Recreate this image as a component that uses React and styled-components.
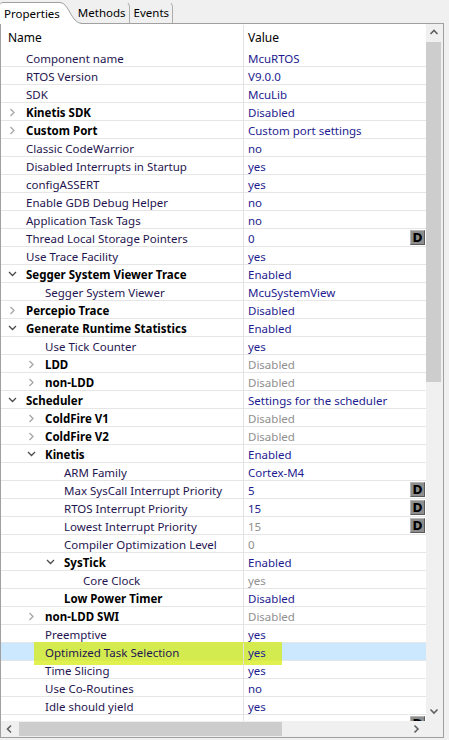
import styled, { createGlobalStyle } from "styled-components"

const GlobalStyle = createGlobalStyle`
  html, body {
    margin: 0;
    padding: 0;
    background: #f0f0f0;
  }
  body {
    font-family: "Noto Sans", "Open Sans", "Liberation Sans", sans-serif;
    font-size: 11.5px;
  }
`

const rows = [
  { name: "Component name", value: "McuRTOS" },
  { name: "RTOS Version", value: "V9.0.0" },
  { name: "SDK", value: "McuLib" },
  { name: "Kinetis SDK", value: "Disabled", bold: true, toggle: "closed" },
  { name: "Custom Port", value: "Custom port settings", bold: true, toggle: "closed" },
  { name: "Classic CodeWarrior", value: "no" },
  { name: "Disabled Interrupts in Startup", value: "yes" },
  { name: "configASSERT", value: "yes" },
  { name: "Enable GDB Debug Helper", value: "no" },
  { name: "Application Task Tags", value: "no" },
  { name: "Thread Local Storage Pointers", value: "0", d: true },
  { name: "Use Trace Facility", value: "yes" },
  { name: "Segger System Viewer Trace", value: "Enabled", bold: true, toggle: "open" },
  { name: "Segger System Viewer", value: "McuSystemView", level: 1 },
  { name: "Percepio Trace", value: "Disabled", bold: true, toggle: "closed" },
  { name: "Generate Runtime Statistics", value: "Enabled", bold: true, toggle: "open" },
  { name: "Use Tick Counter", value: "yes", level: 1 },
  { name: "LDD", value: "Disabled", level: 1, bold: true, toggle: "closed", muted: true },
  { name: "non-LDD", value: "Disabled", level: 1, bold: true, toggle: "closed", muted: true },
  { name: "Scheduler", value: "Settings for the scheduler", bold: true, toggle: "open" },
  { name: "ColdFire V1", value: "Disabled", level: 1, bold: true, toggle: "closed", muted: true },
  { name: "ColdFire V2", value: "Disabled", level: 1, bold: true, toggle: "closed", muted: true },
  { name: "Kinetis", value: "Enabled", level: 1, bold: true, toggle: "open" },
  { name: "ARM Family", value: "Cortex-M4", level: 2 },
  { name: "Max SysCall Interrupt Priority", value: "5", level: 2, d: true },
  { name: "RTOS Interrupt Priority", value: "15", level: 2, d: true },
  { name: "Lowest Interrupt Priority", value: "15", level: 2, d: true, muted: true },
  { name: "Compiler Optimization Level", value: "0", level: 2, muted: true },
  { name: "SysTick", value: "Enabled", level: 2, bold: true, toggle: "open" },
  { name: "Core Clock", value: "yes", level: 3, muted: true },
  { name: "Low Power Timer", value: "Disabled", level: 2, bold: true },
  { name: "non-LDD SWI", value: "Disabled", level: 1, bold: true, toggle: "closed", muted: true },
  { name: "Preemptive", value: "yes", level: 1 },
  { name: "Optimized Task Selection", value: "yes", level: 1, selected: true },
  { name: "Time Slicing", value: "yes", level: 1 },
  { name: "Use Co-Routines", value: "no", level: 1 },
  { name: "Idle should yield", value: "yes", level: 1 },
  { name: "Task Name Length", value: "12", level: 1, d: true },
]

const Chevron = ({ dir }) => {
  if (dir === "open") {
    return (
      <svg width="9" height="6" viewBox="0 0 9 6">
        <path d="M1 1 L4.5 4.5 L8 1" fill="none" stroke="#4a4a4a" strokeWidth="1.3" />
      </svg>
    )
  }
  return (
    <svg width="7" height="9" viewBox="0 0 7 9">
      <path d="M2.5 1 L6 4.5 L2.5 8" fill="none" stroke="#a6a6a6" strokeWidth="1.3" />
    </svg>
  )
}

const ArrowIcon = ({ dir }) => {
  const d = {
    up: "M1.5 6 L5 2.5 L8.5 6",
    down: "M1.5 2.5 L5 6 L8.5 2.5",
    left: "M6 1.5 L2.5 5 L6 8.5",
    right: "M2.5 1.5 L6 5 L2.5 8.5",
  }[dir]
  return (
    <svg width="10" height="10" viewBox="0 0 10 10">
      <path d={d} fill="none" stroke="#606060" strokeWidth="1.6" />
    </svg>
  )
}

const App = () => {
  return (
    <>
      <GlobalStyle />
      <Frame>
        <TabStrip>
          <ActiveTab>
            <ActiveLabel>Properties</ActiveLabel>
            <svg width="22" height="22" viewBox="0 0 22 22">
              <path d="M0 0.5 C 9 0.5, 11 21.5, 22 21.5 L22 22 L0 22 Z" fill="#fff" />
              <path d="M0 0.5 C 9 0.5, 11 21.5, 22 21.5" fill="none" stroke="#a0a0a0" />
            </svg>
          </ActiveTab>
          <Tab $first>Methods</Tab>
          <Tab>Events</Tab>
        </TabStrip>
        <Panel>
          <Table>
            <HeaderRow>
              <HeaderName>Name</HeaderName>
              <HeaderValue>Value</HeaderValue>
            </HeaderRow>
            {rows.map((r) => (
              <Row key={r.name} $selected={r.selected}>
                {r.selected && <Marker />}
                <NameCell $bold={r.bold}>
                  <Toggle $level={r.level || 0}>
                    {r.toggle && <Chevron dir={r.toggle} />}
                  </Toggle>
                  <CellText>{r.name}</CellText>
                </NameCell>
                <ValueCell $muted={r.muted}>
                  <CellText>{r.value}</CellText>
                  {r.d && <DButton>D</DButton>}
                </ValueCell>
              </Row>
            ))}
          </Table>
          <VScroll>
            <ArrowBox>
              <ArrowIcon dir="up" />
            </ArrowBox>
            <VThumb />
            <VTrack />
            <ArrowBox>
              <ArrowIcon dir="down" />
            </ArrowBox>
          </VScroll>
          <HScroll>
            <HArrowBox>
              <ArrowIcon dir="left" />
            </HArrowBox>
            <HThumb />
            <HTrack />
            <HArrowBox>
              <ArrowIcon dir="right" />
            </HArrowBox>
          </HScroll>
          <Corner />
        </Panel>
      </Frame>
    </>
  )
}

export default App

const Frame = styled.div`
  width: 449px;
  height: 740px;
  background: #f0f0f0;
  display: flex;
  flex-direction: column;
  overflow: hidden;
`

const TabStrip = styled.div`
  height: 23px;
  display: flex;
  align-items: flex-end;
  flex-shrink: 0;
`

const ActiveTab = styled.div`
  position: relative;
  z-index: 2;
  height: 22px;
  margin-bottom: -1px;
  display: flex;
  align-items: stretch;
`

const ActiveLabel = styled.div`
  box-sizing: border-box;
  padding: 2px 0 0 4px;
  background: #fff;
  border-top: 1px solid #a0a0a0;
  border-top-left-radius: 3px;
  color: #000;
  font-size: 11.5px;
  line-height: 17px;
  white-space: nowrap;
`

const Tab = styled.div`
  position: relative;
  z-index: 1;
  height: 22px;
  box-sizing: border-box;
  margin-left: ${({ $first }) => ($first ? "-6px" : "0")};
  padding: 2px 3px 0 ${({ $first }) => ($first ? "2px" : "4px")};
  border-right: 1px solid #adadad;
  border-top: 1px solid transparent;
  border-top-right-radius: 6px;
  color: #000;
  font-size: 11.5px;
  line-height: 17px;
  white-space: nowrap;
`

const Panel = styled.div`
  flex: 1;
  position: relative;
  z-index: 0;
  margin: 0 5px 2px 0;
  border: 1px solid #a0a0a0;
  background: #fff;
  display: grid;
  grid-template-columns: 1fr 17px;
  grid-template-rows: 1fr 16px;
  min-height: 0;
`

const Table = styled.div`
  overflow: hidden;
  min-height: 0;
`

const HeaderRow = styled.div`
  display: grid;
  grid-template-columns: 243px 1fr;
  height: 25px;
  align-items: center;
  color: #000;
  font-size: 12px;
  padding-top: 1px;
  box-sizing: border-box;
`

const HeaderName = styled.div`
  height: 100%;
  display: flex;
  align-items: center;
  padding-left: 7px;
  border-right: 1px solid #e3e3e3;
`

const HeaderValue = styled.div`
  padding-left: 4px;
`

const Row = styled.div`
  position: relative;
  display: grid;
  grid-template-columns: 243px 1fr;
  height: 18px;
  box-sizing: border-box;
  border-bottom: 1px solid #e6e6e6;
  background: ${({ $selected }) => ($selected ? "#cce8ff" : "transparent")};
`

const Marker = styled.div`
  position: absolute;
  left: 33px;
  width: 248px;
  top: -1px;
  height: 23px;
  z-index: 1;
  background: rgba(214, 236, 30, 0.78);
  pointer-events: none;
`

const CellText = styled.span`
  padding-top: 2px;
  line-height: 15px;
`

const NameCell = styled.div`
  position: relative;
  z-index: 2;
  display: flex;
  align-items: center;
  white-space: nowrap;
  border-right: 1px solid #e3e3e3;
  font-weight: ${({ $bold }) => ($bold ? 700 : 400)};
  color: ${({ $bold }) => ($bold ? "#000" : "#1f1550")};
`

const Toggle = styled.span`
  display: inline-flex;
  align-items: center;
  width: 18px;
  height: 17px;
  padding-top: 1px;
  box-sizing: border-box;
  margin-left: ${({ $level }) => 7 + $level * 19}px;
  flex-shrink: 0;
`

const ValueCell = styled.div`
  position: relative;
  z-index: 2;
  display: flex;
  align-items: center;
  justify-content: space-between;
  padding-left: 4px;
  white-space: nowrap;
  color: ${({ $muted }) => ($muted ? "#8f8f8f" : "#1d1b8f")};
`

const DButton = styled.span`
  width: 15px;
  height: 15px;
  margin-right: 1px;
  box-sizing: border-box;
  display: flex;
  align-items: center;
  justify-content: center;
  background: #8e8e8e;
  border: 1px solid #5a5a5a;
  border-top-color: #b4b4b4;
  border-left-color: #b4b4b4;
  color: #000;
  font-family: "DejaVu Sans", sans-serif;
  font-weight: 700;
  font-size: 12px;
`

const VScroll = styled.div`
  background: #f0f0f0;
  display: flex;
  flex-direction: column;
  min-height: 0;
`

const ArrowBox = styled.div`
  height: 18px;
  display: flex;
  align-items: center;
  justify-content: center;
  padding-right: 1px;
  flex-shrink: 0;
`

const VThumb = styled.div`
  height: 340px;
  margin-right: 2px;
  background: #cdcdcd;
  flex-shrink: 0;
`

const VTrack = styled.div`
  flex: 1;
`

const HScroll = styled.div`
  background: #f0f0f0;
  display: flex;
  align-items: stretch;
`

const HArrowBox = styled.div`
  width: 18px;
  display: flex;
  align-items: center;
  justify-content: center;
  flex-shrink: 0;
`

const HThumb = styled.div`
  width: 263px;
  margin: 1px 0;
  background: #cdcdcd;
`

const HTrack = styled.div`
  flex: 1;
`

const Corner = styled.div`
  background: #f0f0f0;
`
